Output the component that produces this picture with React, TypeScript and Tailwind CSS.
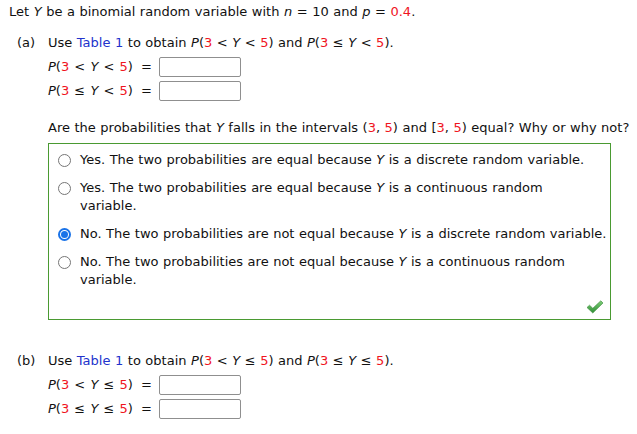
import React from "react";

const R = ({ children }: { children: React.ReactNode }) => (
  <span className="text-[#f0141e]">{children}</span>
);
const I = ({ children }: { children: React.ReactNode }) => (
  <span className="italic">{children}</span>
);

function Radio({ checked }: { checked?: boolean }) {
  if (checked) {
    return (
      <span className="mt-[3px] flex h-[13px] w-[13px] shrink-0 items-center justify-center rounded-full border-[2px] border-[#1a73e8] bg-white">
        <span className="h-[7px] w-[7px] rounded-full bg-[#1a73e8]" />
      </span>
    );
  }
  return (
    <span className="mt-[3px] h-[13px] w-[13px] shrink-0 rounded-full border border-[#767676] bg-white" />
  );
}

function Row({ label }: { label: React.ReactNode }) {
  return (
    <div className="flex items-center h-[20px]">
      <span className="w-[93px] whitespace-pre [word-spacing:1px]">{label}</span>
      <span className="w-[18px]">=</span>
      <span className="h-[20px] w-[82px] rounded-[2px] border border-[#8f8f8f] bg-white" />
    </div>
  );
}

function Option({ checked, children }: { checked?: boolean; children: React.ReactNode }) {
  return (
    <div className="flex gap-[9px]">
      <Radio checked={checked} />
      <div className="whitespace-nowrap">{children}</div>
    </div>
  );
}

export default function App() {
  return (
    <div
      className="w-[637px] h-[434px] bg-white text-[#111] text-[13px] leading-[18px] pt-[3px] pl-[9px] overflow-hidden [word-spacing:0.4px]"
      style={{ fontFamily: '"DejaVu Sans", Verdana, sans-serif' }}
    >
      <div className="whitespace-pre">
        Let <I>Y</I> be a binomial random variable with <I>n</I> = 10 and <I>p</I> = <R>0.4</R>.
      </div>

      <div className="flex mt-[13px] pl-[8px]">
        <div className="w-[31px]">(a)</div>
        <div>
          <div className="whitespace-pre">
            Use <span className="text-[#2233cc]">Table 1</span> to obtain <I>P</I>(<R>3</R> &lt; <I>Y</I> &lt; <R>5</R>) and <I>P</I>(<R>3</R> ≤ <I>Y</I> &lt; <R>5</R>).
          </div>
          <div className="mt-[5px] flex flex-col gap-[4px]">
            <Row label={<><I>P</I>(<R>3</R> &lt; <I>Y</I> &lt; <R>5</R>)</>} />
            <Row label={<><I>P</I>(<R>3</R> ≤ <I>Y</I> &lt; <R>5</R>)</>} />
          </div>
          <div className="mt-[18px] whitespace-pre">
            Are the probabilities that <I>Y</I> falls in the intervals (<R>3</R>, <R>5</R>) and [<R>3</R>, <R>5</R>) equal? Why or why not?
          </div>
          <div className="relative mt-[6px] h-[177px] w-[563px] border border-[#4a9a32] pt-[7px] pl-[9px]">
            <div className="flex flex-col gap-[10px]">
              <Option>
                Yes. The two probabilities are equal because <I>Y</I> is a discrete random variable.
              </Option>
              <Option>
                Yes. The two probabilities are equal because <I>Y</I> is a continuous random
                <br />
                variable.
              </Option>
              <Option checked>
                No. The two probabilities are not equal because <I>Y</I> is a discrete random variable.
              </Option>
              <Option>
                No. The two probabilities are not equal because <I>Y</I> is a continuous random
                <br />
                variable.
              </Option>
            </div>
            <svg
              className="absolute right-[6px] bottom-[5px]"
              width="18"
              height="14"
              viewBox="0 0 18 14"
            >
              <defs>
                <linearGradient id="g" x1="0" y1="0" x2="0" y2="1">
                  <stop offset="0" stopColor="#7fcf78" />
                  <stop offset="1" stopColor="#2f8f36" />
                </linearGradient>
              </defs>
              <path
                d="M1 7.5 L3.5 5.2 L6.8 8.3 L14.8 0.8 L17 3 L6.8 13 Z"
                fill="url(#g)"
                stroke="#3a8a3a"
                strokeWidth="0.6"
                strokeLinejoin="round"
              />
            </svg>
          </div>
        </div>
      </div>

      <div className="flex mt-[32px] pl-[8px]">
        <div className="w-[31px]">(b)</div>
        <div>
          <div className="whitespace-pre">
            Use <span className="text-[#2233cc]">Table 1</span> to obtain <I>P</I>(<R>3</R> &lt; <I>Y</I> ≤ <R>5</R>) and <I>P</I>(<R>3</R> ≤ <I>Y</I> ≤ <R>5</R>).
          </div>
          <div className="mt-[5px] flex flex-col gap-[4px]">
            <Row label={<><I>P</I>(<R>3</R> &lt; <I>Y</I> ≤ <R>5</R>)</>} />
            <Row label={<><I>P</I>(<R>3</R> ≤ <I>Y</I> ≤ <R>5</R>)</>} />
          </div>
        </div>
      </div>
    </div>
  );
}
